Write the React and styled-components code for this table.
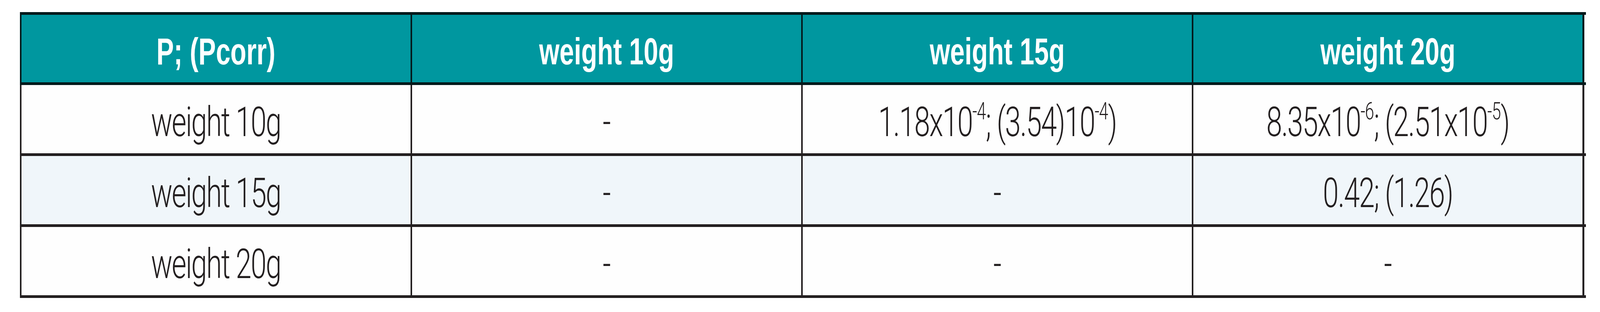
import React from 'react';
import styled, { createGlobalStyle } from 'styled-components';

const Global = createGlobalStyle`
  html, body { margin: 0; padding: 0; background: #ffffff; }
`;

const LINE = '#231f20';
const HEAD_LINE = '#04191b';
const REF_W = 5884;
// horizontal unit: one pixel of the 5884px-wide design, scaled to the window width
const u = n => `calc(${n} * 100vw / ${REF_W})`;

const Page = styled.div`
  padding: 31px 0 0 ${u(73)};
  box-sizing: border-box;
  width: 100%;
  height: 800px;
  overflow: hidden;
`;

const Table = styled.div`
  width: ${u(5760)};
  display: flex;
  flex-direction: column;
`;

const Row = styled.div`
  display: grid;
  grid-template-columns: repeat(4, minmax(0, 1fr));
  padding-right: ${u(14)};
  border-bottom: 7px solid ${p => (p.$head ? HEAD_LINE : LINE)};
  border-top: ${p => (p.$head ? `7px solid ${HEAD_LINE}` : 'none')};
  background: #ffffff;
`;

const Cell = styled.div`
  box-sizing: border-box;
  height: ${p => (p.$head ? '173px' : '175px')};
  border-left: ${u(7)} solid ${p => (p.$head ? HEAD_LINE : LINE)};
  background: ${p => (p.$head ? '#00979f' : p.$stripe ? '#f0f6fa' : '#fefefe')};
  color: ${p => (p.$head ? '#ffffff' : LINE)};
  display: flex;
  align-items: center;
  justify-content: center;
  white-space: nowrap;
  font-family: ${p => (p.$head ? '"Liberation Sans", Arial, sans-serif' : 'Roboto, "Liberation Sans", sans-serif')};
  font-weight: ${p => (p.$head ? 700 : 300)};
  font-size: ${p => (p.$head ? '96px' : '105px')};
  letter-spacing: ${p => (p.$head ? '0px' : '-3px')};
  padding-top: ${p => (p.$head ? '14px' : '16px')};
  &:last-child {
    box-shadow: ${u(7)} 0 0 ${p => (p.$head ? HEAD_LINE : LINE)};
  }
`;

const Text = styled.span`
  display: inline-block;
  transform: scaleX(var(--sx, 1));
  transform-origin: center;
`;

const Sup = styled.span`
  font-size: 0.58em;
  vertical-align: 0.7em;
  line-height: 0;
  letter-spacing: -1px;
`;

const headers = ['P; (Pcorr)', 'weight 10g', 'weight 15g', 'weight 20g'];

const rows = [
  {
    label: 'weight 10g',
    cells: [
      '-',
      <>1.18x10<Sup>-4</Sup>; (3.54)10<Sup>-4</Sup>)</>,
      <>8.35x10<Sup>-6</Sup>; (2.51x10<Sup>-5</Sup>)</>,
    ],
  },
  { label: 'weight 15g', cells: ['-', '-', '0.42; (1.26)'] },
  { label: 'weight 20g', cells: ['-', '-', '-'] },
];

export default function App() {
  const sx = typeof window !== 'undefined' ? Math.min(1, window.innerWidth / REF_W) : 1;
  return (
    <Page style={{ '--sx': sx }}>
      <Global />
      <Table>
        <Row $head>
          {headers.map(h => (
            <Cell $head key={h}>
              <Text>{h}</Text>
            </Cell>
          ))}
        </Row>
        {rows.map((r, i) => (
          <Row key={r.label}>
            <Cell $stripe={i === 1}>
              <Text>{r.label}</Text>
            </Cell>
            {r.cells.map((c, j) => (
              <Cell $stripe={i === 1} key={j}>
                <Text>{c}</Text>
              </Cell>
            ))}
          </Row>
        ))}
      </Table>
    </Page>
  );
}
